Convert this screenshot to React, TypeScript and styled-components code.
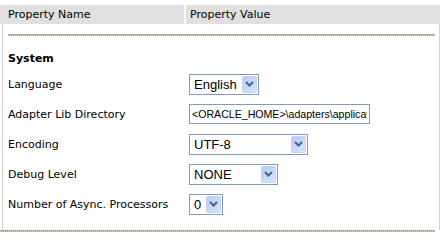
import styled, { createGlobalStyle } from 'styled-components';

const GlobalStyle = createGlobalStyle`
    body {
        margin: 0;
        background: #ffffff;
        font-family: 'DejaVu Sans', Verdana, sans-serif;
        font-size: 11px;
        color: #000000;
    }
`;

type Field = {
    label: string;
    kind: 'select' | 'text';
    value: string;
    width: number;
};

const fields: Field[] = [
    { label: 'Language', kind: 'select', value: 'English', width: 70 },
    { label: 'Adapter Lib Directory', kind: 'text', value: '<ORACLE_HOME>\\adapters\\application', width: 181 },
    { label: 'Encoding', kind: 'select', value: 'UTF-8', width: 119 },
    { label: 'Debug Level', kind: 'select', value: 'NONE', width: 89 },
    { label: 'Number of Async. Processors', kind: 'select', value: '0', width: 34 },
];

const Chevron = () => (
    <svg width="9" height="6" viewBox="0 0 9 6">
        <path d="M1 1 L4.5 4.5 L8 1" fill="none" stroke="#4d6185" strokeWidth="2" />
    </svg>
);

const DropDown = ({ value, width }: { value: string; width: number }) => (
    <SelectBox $width={width}>
        <SelectText>{value}</SelectText>
        <ArrowButton>
            <Chevron />
        </ArrowButton>
    </SelectBox>
);

const App = () => {
    return (
        <>
            <GlobalStyle />
            <Panel>
                <HeaderBar>
                    <HeadCell>Property Name</HeadCell>
                    <HeadCell $divider>Property Value</HeadCell>
                </HeaderBar>
                <Body>
                    <Rule />
                    <Section>System</Section>
                    <Rows>
                        {fields.map((f) => (
                            <Row key={f.label}>
                                <Label>{f.label}</Label>
                                {f.kind === 'select' ? (
                                    <DropDown value={f.value} width={f.width} />
                                ) : (
                                    <TextInput style={{ width: f.width }} defaultValue={f.value} readOnly />
                                )}
                            </Row>
                        ))}
                    </Rows>
                </Body>
                <BottomRule />
            </Panel>
        </>
    );
};

export default App;

const Panel = styled.div`
    width: 440px;
    padding-top: 5px;
    display: flex;
    flex-direction: column;
`;

const HeaderBar = styled.div`
    height: 19px;
    background: #e0e0e0;
    display: grid;
    grid-template-columns: 184px 1fr;
    align-items: stretch;
`;

const HeadCell = styled.div<{ $divider?: boolean }>`
    display: flex;
    align-items: center;
    padding-left: ${(p) => (p.$divider ? '4px' : '8px')};
    border-left: ${(p) => (p.$divider ? '2px solid #ffffff' : 'none')};
`;

const Body = styled.div`
    margin-left: 2px;
    border-left: 1px solid #d4d4d4;
    border-right: 1px solid #d4d4d4;
    padding: 10px 4px 0 5px;
    height: 206px;
    box-sizing: border-box;
`;

const Rule = styled.div`
    height: 1px;
    background: #a4a48c;
    border-bottom: 1px dotted #d6d6be;
`;

const Section = styled.div`
    font-weight: bold;
    margin-top: 15px;
    height: 15px;
    line-height: 15px;
`;

const Rows = styled.div`
    margin-top: 3px;
    display: flex;
    flex-direction: column;
`;

const Row = styled.div`
    display: grid;
    grid-template-columns: 181px 1fr;
    align-items: center;
    height: 30px;
`;

const Label = styled.div`
    white-space: nowrap;
`;

const SelectBox = styled.div<{ $width: number }>`
    width: ${(p) => p.$width}px;
    height: 21px;
    box-sizing: border-box;
    border: 1px solid #7f9db9;
    background: #ffffff;
    display: flex;
    align-items: center;
    justify-content: space-between;
    padding: 1px;
    font-family: 'Liberation Sans', Arial, sans-serif;
    font-size: 13px;
`;

const SelectText = styled.span`
    padding-left: 3px;
`;

const ArrowButton = styled.span`
    width: 15px;
    height: 17px;
    box-sizing: border-box;
    border: 1px solid #c3d3fd;
    border-radius: 2px;
    background: linear-gradient(135deg, #b6cbfa 0%, #c8d8fc 50%, #d8e4fd 100%);
    display: flex;
    align-items: center;
    justify-content: center;
`;

const TextInput = styled.input`
    height: 20px;
    box-sizing: border-box;
    border: 1px solid #7f9db9;
    padding: 0 2px;
    font-family: 'Liberation Sans', Arial, sans-serif;
    font-size: 10.6px;
    color: #000000;
    outline: none;
`;

const BottomRule = styled.div`
    width: 435px;
    height: 1px;
    background: #a4a48c;
    border-bottom: 1px dotted #d6d6be;
`;
